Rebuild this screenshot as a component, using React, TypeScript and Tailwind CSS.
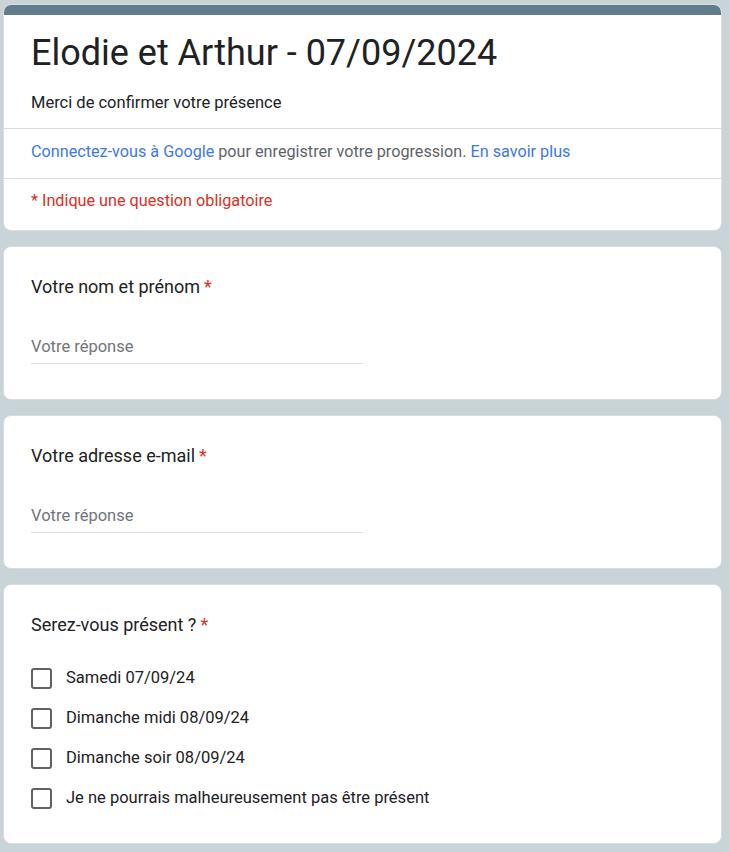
import React from "react";

const font = { fontFamily: "Roboto, 'Noto Sans', Arial, sans-serif" };

const Required = () => <span className="text-[#d93025] ml-1">*</span>;

const TextQuestion: React.FC<{ label: string }> = ({ label }) => (
  <div className="bg-white rounded-[8px] border border-[#dadce0] pl-[27px] pr-6 pt-[28px] pb-[35px]">
    <div className="text-[18px] leading-[24px] text-[#202124]">
      {label}
      <Required />
    </div>
    <div className="mt-[38px] w-[332px] border-b border-[#dadce0] pb-[6px] text-[16.5px] leading-[20px] text-[#70757a]">
      Votre réponse
    </div>
  </div>
);

const options = [
  "Samedi 07/09/24",
  "Dimanche midi 08/09/24",
  "Dimanche soir 08/09/24",
  "Je ne pourrais malheureusement pas être présent",
];

export default function App() {
  return (
    <div className="min-h-[852px] bg-[#c9d4d8] pt-[4px] pl-[3px]" style={font}>
      <div className="w-[719px] flex flex-col gap-[15px]">
        {/* header */}
        <div className="bg-white rounded-[8px] border border-[#dadce0] overflow-hidden">
          <div className="h-[10px] bg-[#607d8b]" />
          <div className="pl-[27px] pr-6 pt-[18px] pb-[15px]">
            <h1 className="text-[36px] leading-[40px] text-[#202124]">
              Elodie et Arthur - 07/09/2024
            </h1>
            <p className="mt-[20px] text-[16.5px] leading-[20px] text-[#202124]">
              Merci de confirmer votre présence
            </p>
          </div>
          <div className="border-t border-[#dadce0] pl-[27px] pt-[13px] pb-[16px] text-[16.2px] leading-[20px] text-[#5f6368]">
            <span className="text-[#3b78e7]">Connectez-vous à Google</span> pour
            enregistrer votre progression.{" "}
            <span className="text-[#3b78e7]">En savoir plus</span>
          </div>
          <div className="border-t border-[#dadce0] pl-[27px] pt-[12px] pb-[19px] text-[16.2px] leading-[20px] text-[#d93025]">
            * Indique une question obligatoire
          </div>
        </div>

        <TextQuestion label="Votre nom et prénom" />
        <TextQuestion label="Votre adresse e-mail" />

        <div className="bg-white rounded-[8px] border border-[#dadce0] pl-[27px] pr-6 pt-[28px] pb-[25px]">
          <div className="text-[18px] leading-[24px] text-[#202124]">
            Serez-vous présent ?
            <Required />
          </div>
          <div className="mt-[21px] flex flex-col">
            {options.map((o) => (
              <label key={o} className="h-[40px] flex items-center gap-[14px]">
                <span className="w-[21px] h-[21px] rounded-[3px] border-2 border-[#5f6368] shrink-0" />
                <span className="text-[16.5px] leading-[20px] text-[#202124]">{o}</span>
              </label>
            ))}
          </div>
        </div>
      </div>
    </div>
  );
}
